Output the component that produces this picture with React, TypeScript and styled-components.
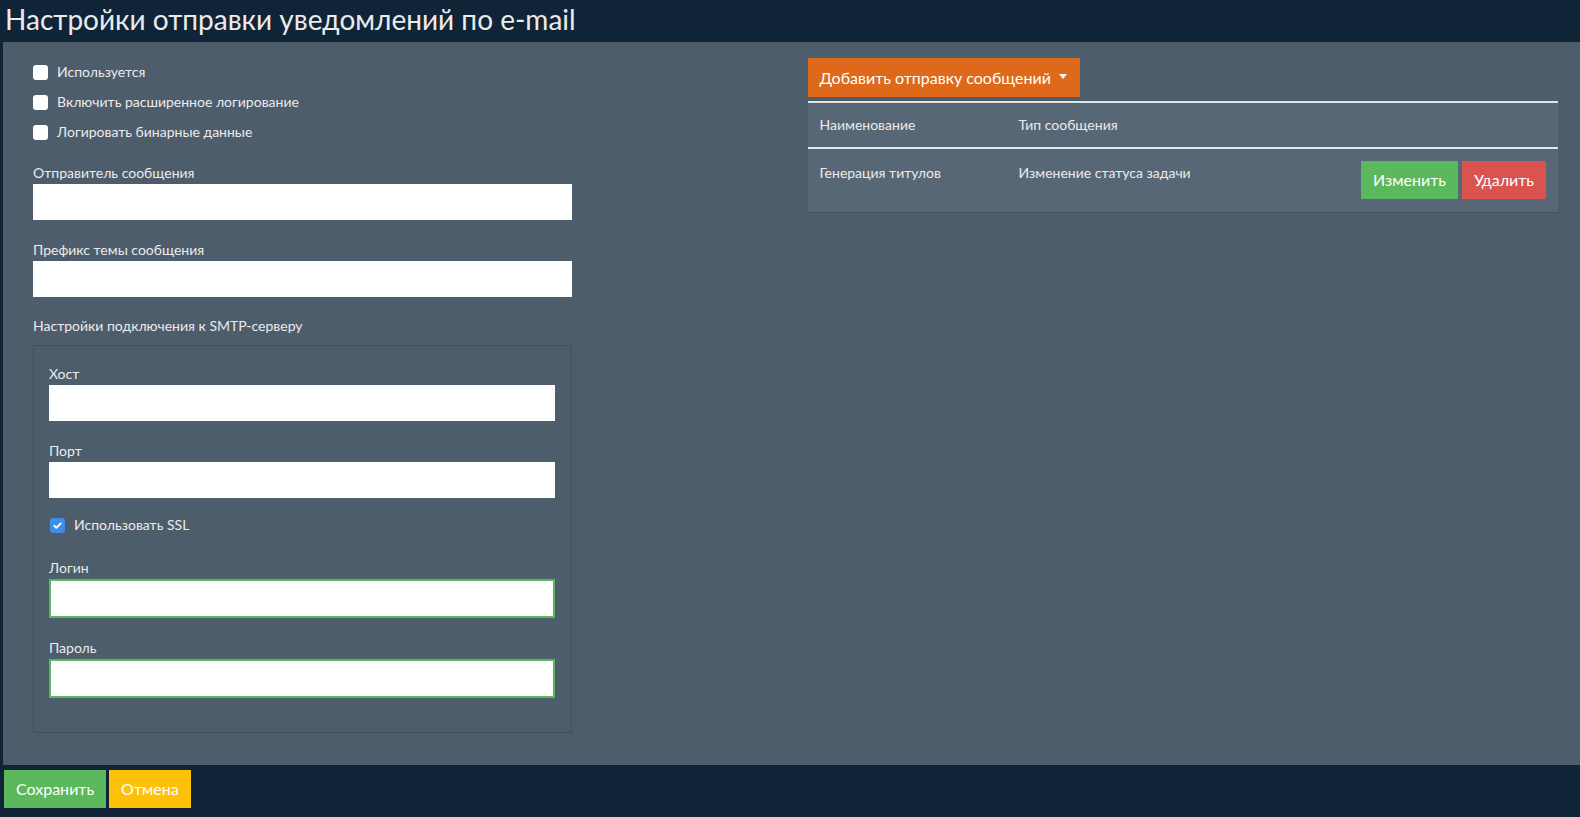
import React from "react";
import styled, { createGlobalStyle } from "styled-components";

const GlobalStyle = createGlobalStyle`
  html, body {
    margin: 0;
    padding: 0;
    background: #0f2537;
    font-family: Lato, "Open Sans", "Liberation Sans", sans-serif;
    color: #ebebeb;
  }
  * { box-sizing: border-box; }
`;

type Sender = { name: string; type: string };

const senders: Sender[] = [
  { name: "Генерация титулов", type: "Изменение статуса задачи" },
];

const Check = ({ label, checked }: { label: string; checked?: boolean }) => (
  <CheckRow>
    <CheckInput type="checkbox" defaultChecked={checked} />
    <span>{label}</span>
  </CheckRow>
);

const Field = ({ label, valid }: { label: string; valid?: boolean }) => (
  <FormGroup>
    <Label>{label}</Label>
    <TextInput type="text" $valid={valid} />
  </FormGroup>
);

export default function App() {
  return (
    <>
      <GlobalStyle />
      <Title>Настройки отправки уведомлений по e-mail</Title>
      <Panel>
        <LeftCol>
          <CheckList>
            <Check label="Используется" />
            <Check label="Включить расширенное логирование" />
            <Check label="Логировать бинарные данные" />
          </CheckList>
          <Field label="Отправитель сообщения" />
          <Field label="Префикс темы сообщения" />
          <SectionLabel>Настройки подключения к SMTP-серверу</SectionLabel>
          <Fieldset>
            <Field label="Хост" />
            <Field label="Порт" />
            <SslRow>
              <Check label="Использовать SSL" checked />
            </SslRow>
            <Field label="Логин" valid />
            <Field label="Пароль" valid />
          </Fieldset>
        </LeftCol>
        <RightCol>
          <DropdownButton>
            Добавить отправку сообщений
            <Caret />
          </DropdownButton>
          <Table>
            <thead>
              <tr>
                <Th style={{ width: 199 }}>Наименование</Th>
                <Th>Тип сообщения</Th>
                <Th />
              </tr>
            </thead>
            <tbody>
              {senders.map((s) => (
                <tr key={s.name}>
                  <Td>{s.name}</Td>
                  <Td>{s.type}</Td>
                  <ActionsTd>
                    <Button $color="#5cb85c">Изменить</Button>
                    <Button $color="#d9534f">Удалить</Button>
                  </ActionsTd>
                </tr>
              ))}
            </tbody>
          </Table>
        </RightCol>
      </Panel>
      <Footer>
        <Button $color="#5cb85c">Сохранить</Button>
        <Button $color="#ffc107">Отмена</Button>
      </Footer>
    </>
  );
}

const Title = styled.h1`
  margin: 0;
  height: 42px;
  padding: 2px 0 0 5px;
  font-size: 28px;
  font-weight: 400;
  line-height: 34px;
  color: #ebebeb;
  white-space: nowrap;
`;

const Panel = styled.div`
  margin-left: 3px;
  background: #4e5d6c;
  padding: 16px 22px 32px 30px;
  display: grid;
  grid-template-columns: 1fr 1fr;
  column-gap: 24px;
  align-items: start;
`;

const LeftCol = styled.div`
  max-width: 539px;
  font-size: 14px;
`;

const RightCol = styled.div`
  font-size: 14px;
`;

const CheckList = styled.div`
  padding-top: 4px;
  margin-bottom: 21px;
`;

const CheckRow = styled.label`
  display: flex;
  align-items: center;
  gap: 9px;
  height: 20px;
  line-height: 20px;
  margin-bottom: 10px;
  font-size: 14px;
`;

const CheckInput = styled.input`
  appearance: none;
  margin: 0;
  width: 15px;
  height: 15px;
  border-radius: 3px;
  background: #fff;
  flex: none;
  &:checked {
    background: #3d8fe6
      url("data:image/svg+xml;utf8,<svg xmlns='http://www.w3.org/2000/svg' viewBox='0 0 16 16'><path d='M4 8.3l2.6 2.6L12 5.4' fill='none' stroke='white' stroke-width='2.2' stroke-linecap='round' stroke-linejoin='round'/></svg>")
      center / 13px 13px no-repeat;
  }
`;

const FormGroup = styled.div`
  margin-bottom: 20px;
`;

const Label = styled.div`
  line-height: 20px;
  margin-bottom: 1px;
`;

const TextInput = styled.input<{ $valid?: boolean }>`
  display: block;
  width: 100%;
  height: ${(p) => (p.$valid ? "39px" : "36px")};
  border: ${(p) => (p.$valid ? "2px solid #5cb85c" : "none")};
  border-radius: 0;
  background: #fff;
  font-family: inherit;
  font-size: 14px;
  padding: 6px 12px;
  outline: none;
`;

const SectionLabel = styled.div`
  line-height: 20px;
  margin-top: -1px;
  margin-bottom: 9px;
`;

const Fieldset = styled.div`
  border: 1px solid #43515e;
  padding: 18px 16px 14px 15px;
`;

const SslRow = styled.div`
  margin: -3px 0 23px 1px;
  & > label {
    margin-bottom: 0;
  }
`;

const Button = styled.button<{ $color: string }>`
  height: 38px;
  padding: 0 12px;
  border: none;
  border-radius: 0;
  background: ${(p) => p.$color};
  color: #fff;
  font-family: inherit;
  font-size: 16px;
  line-height: 38px;
  cursor: pointer;
`;

const DropdownButton = styled(Button).attrs({ $color: "#df691a" })`
  display: inline-flex;
  align-items: center;
  gap: 8px;
  height: 39px;
  padding: 0 13px 0 12px;
`;

const Caret = styled.span`
  width: 0;
  height: 0;
  border-left: 4px solid transparent;
  border-right: 4px solid transparent;
  border-top: 5px solid #fff;
  margin-top: -2px;
`;

const Table = styled.table`
  width: 100%;
  margin-top: 4px;
  border-collapse: collapse;
  background: #586776;
  color: #ebebeb;
  font-size: 14px;
  border-top: 2px solid #dfe3e7;
  border-bottom: 1px solid #44525f;
`;

const Th = styled.th`
  text-align: left;
  font-weight: 400;
  padding: 12px 12px 12px;
  line-height: 20px;
  border-bottom: 2px solid #e6e9ec;
`;

const Td = styled.td`
  vertical-align: top;
  padding: 14px 12px;
  line-height: 20px;
`;

const ActionsTd = styled.td`
  padding: 12px 12px 13px;
  text-align: right;
  white-space: nowrap;
  & > button + button {
    margin-left: 4px;
  }
`;

const Footer = styled.div`
  display: flex;
  gap: 3px;
  padding: 5px 0 11px 4px;
`;
